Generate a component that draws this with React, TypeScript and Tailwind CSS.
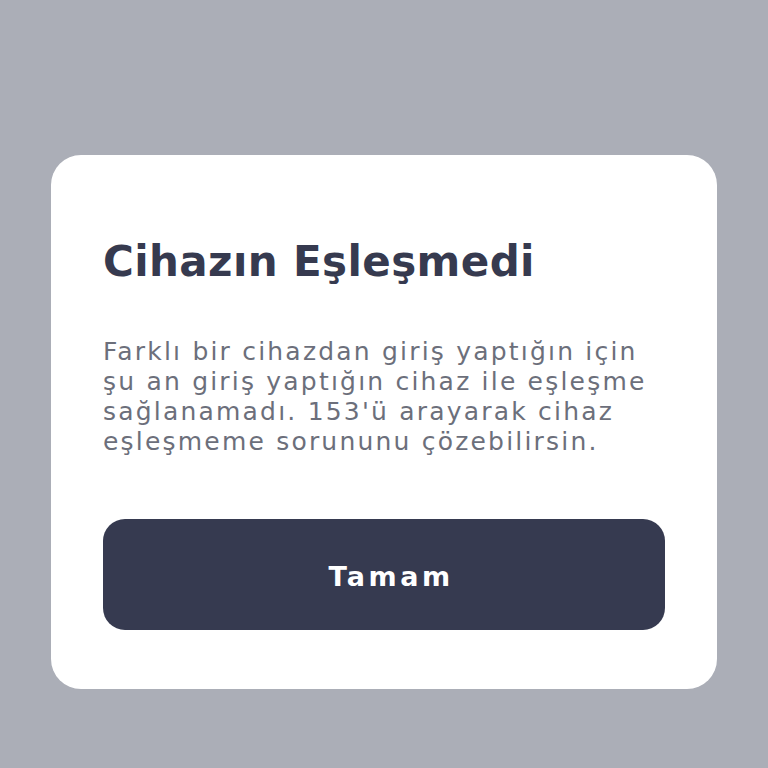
export default function App() {
  return (
    <div className="min-h-screen w-full bg-[#abaeb7] pt-[155px] flex justify-center font-['DejaVu_Sans',sans-serif]">
      <div className="w-[666px] h-[534px] bg-white rounded-[30px] px-[52px] pt-[83px] flex flex-col">
        <h1 className="text-[42px] leading-[48px] font-bold text-[#363a4f] whitespace-nowrap tracking-[0.4px]">
          Cihazın Eşleşmedi
        </h1>
        <p className="mt-[51px] text-[25px] leading-[30px] text-[#6c6f7b] whitespace-nowrap tracking-[2.2px]">
          Farklı bir cihazdan giriş yaptığın için
          <br />
          şu an giriş yaptığın cihaz ile eşleşme
          <br />
          sağlanamadı. 153'ü arayarak cihaz
          <br />
          eşleşmeme sorununu çözebilirsin.
        </p>
        <button className="mt-[62px] w-full h-[111px] pt-[6px] pl-[14px] rounded-[22px] bg-[#363a50] text-white text-[27px] font-bold tracking-[3.5px]">
          Tamam
        </button>
      </div>
    </div>
  );
}
